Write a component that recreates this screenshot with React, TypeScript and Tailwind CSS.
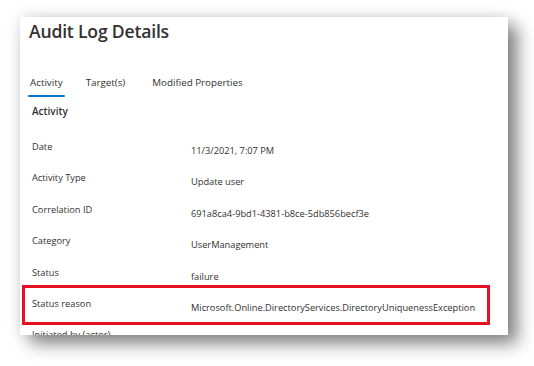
const rows = [
  { label: "Date", value: "11/3/2021, 7:07 PM" },
  { label: "Activity Type", value: "Update user" },
  { label: "Correlation ID", value: "691a8ca4-9bd1-4381-b8ce-5db856becf3e" },
  { label: "Category", value: "UserManagement" },
  { label: "Status", value: "failure" },
  { label: "Status reason", value: "Microsoft.Online.DirectoryServices.DirectoryUniquenessException", flagged: true },
  { label: "Initiated by (actor)", value: "" },
];

export default function App() {
  return (
    <div className="w-[534px] h-[366px] bg-white overflow-hidden pt-[17px] pl-[20px] font-['Open_Sans',sans-serif] text-[#323130]">
      <div className="w-[488px] h-[318px] bg-white overflow-hidden shadow-[0_0_14px_rgba(0,0,0,0.13),10px_9px_16px_rgba(0,0,0,0.45)]">
        <h1 className="pl-[9px] pt-[2px] text-[17.6px] leading-[24px] font-semibold tracking-[-0.2px]">Audit Log Details</h1>

        {/* Tabs */}
        <div className="flex items-start pl-[8px] mt-[33px] text-[9.8px] leading-[14px]">
          <div className="flex flex-col">
            <span className="px-[2px]">Activity</span>
            <span className="mt-[5px] h-[2px] bg-[#0078d4] rounded-full" />
          </div>
          <span className="ml-[21px]">Target(s)</span>
          <span className="ml-[27px]">Modified Properties</span>
        </div>

        <div className="pl-[12px] mt-[7px] text-[10px] leading-[14px] font-semibold">Activity</div>

        <div className="mt-[22px] text-[9.25px] leading-[14px]">
          {rows.map((r) => (
            <div key={r.label} className="relative flex h-[31.4px] pl-[12px]">
              {r.flagged && (
                <div className="absolute left-[2px] top-[-12px] w-[468px] h-[40px] border-[3px] border-[#e81123]" />
              )}
              <span className="w-[159px] shrink-0">{r.label}</span>
              <span className="mt-[4px] whitespace-nowrap">{r.value}</span>
            </div>
          ))}
        </div>
      </div>
    </div>
  );
}
